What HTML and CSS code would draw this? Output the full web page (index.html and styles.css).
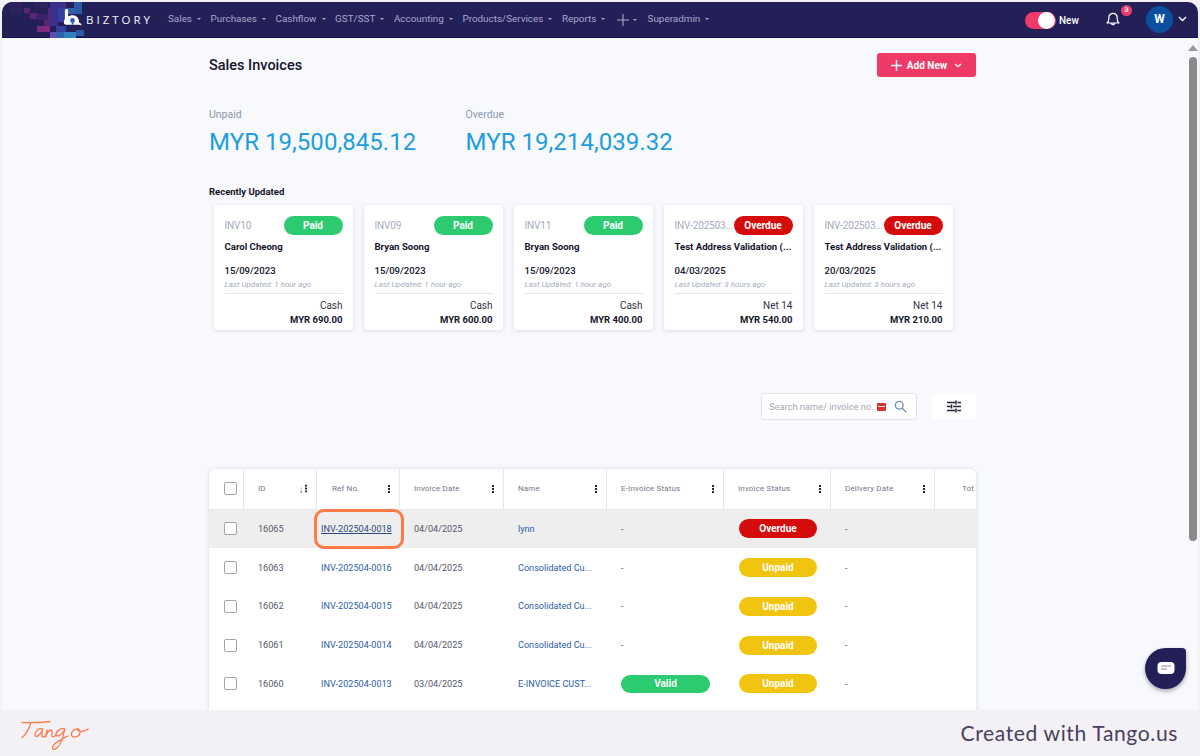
FILE: index.html
```html
<!DOCTYPE html>
<html lang="en">
<head>
<meta charset="utf-8">
<title>Sales Invoices</title>
<link rel="stylesheet" href="styles.css">
</head>
<body>
<div class="shot">
  <div class="window">
    <header class="nav">
      <svg class="pixels" width="100" height="36" viewBox="0 0 100 36" aria-hidden="true">
        <g fill="#2d2160"><rect x="8" y="0" width="12" height="12"/><rect x="32" y="0" width="14" height="6"/></g>
        <g fill="#3c2268"><rect x="22" y="6" width="6" height="6"/><rect x="36" y="12" width="10" height="6"/></g>
        <g fill="#5a2673"><rect x="22" y="6" width="6" height="5"/><rect x="28" y="11" width="7" height="6"/><rect x="46" y="6" width="8" height="12"/><rect x="42" y="18" width="6" height="6"/></g>
        <g fill="#7d2a7f"><rect x="35" y="24" width="13" height="6"/></g>
        <g fill="#3a2f8a"><rect x="48" y="0" width="8" height="24"/><rect x="56" y="0" width="8" height="12"/></g>
        <g fill="#33409f"><rect x="56" y="6" width="10" height="14"/><rect x="54" y="24" width="10" height="6"/></g>
        <g fill="#6a4ab0"><rect x="48" y="30" width="6" height="6"/></g>
        <g fill="#2f63ae"><rect x="54" y="30" width="14" height="6"/><rect x="66" y="6" width="8" height="6"/></g>
        <g fill="#2e82c0"><rect x="62" y="30" width="12" height="6"/></g>
        <g fill="#2c5aa6"><rect x="72" y="0" width="8" height="12"/><rect x="74" y="28" width="8" height="6"/></g>
      </svg>
      <a class="brand">
        <svg class="brand-mark" width="20" height="20" viewBox="0 0 20 20" aria-hidden="true">
          <path d="M3.500 1.500v11" stroke="#fff" stroke-width="3.200" stroke-linecap="round" fill="none"/>
          <path d="M10 6.200a6 6 0 0 1 5.800 7.200c1.600.3 2.600 1.300 2.800 3.200-1.200-.8-2.300-1-3.400-.8H3.600C1.600 15.800.6 14.600.9 12.500 1.800 8.600 5.500 6.200 10 6.200z" fill="#fff"/>
          <circle cx="9.500" cy="11.500" r="2.400" fill="#2f63ae"/>
          <path d="M9 12h1.200l.4 3.500H8.600z" fill="#2f63ae"/>
        </svg>
        <span class="brand-name">BIZTORY</span>
      </a>
      <nav class="menu">
        <a class="menu-item">Sales<i class="caret"></i></a>
        <a class="menu-item">Purchases<i class="caret"></i></a>
        <a class="menu-item">Cashflow<i class="caret"></i></a>
        <a class="menu-item">GST/SST<i class="caret"></i></a>
        <a class="menu-item">Accounting<i class="caret"></i></a>
        <a class="menu-item">Products/Services<i class="caret"></i></a>
        <a class="menu-item">Reports<i class="caret"></i></a>
        <a class="menu-item menu-plus"><svg width="12" height="12" viewBox="0 0 12 12" aria-hidden="true"><path d="M6 0v12M0 6h12" stroke="#a9a6c8" stroke-width="1.100"/></svg><i class="caret"></i></a>
        <a class="menu-item">Superadmin<i class="caret"></i></a>
      </nav>
      <div class="nav-right">
        <div class="toggle"><span class="toggle-knob"></span></div>
        <span class="toggle-label">New</span>
        <div class="bell">
          <svg width="14" height="16" viewBox="0 0 14 16" aria-hidden="true"><path d="M1 12c1.300-1 1.800-2 1.800-4V6.500a4.200 4.200 0 0 1 8.400 0V8c0 2 .5 3 1.800 4zM5.400 12.500a1.700 1.700 0 0 0 3.200 0" fill="none" stroke="#fff" stroke-width="1.200" stroke-linejoin="round"/></svg>
          <span class="badge">3</span>
        </div>
        <div class="avatar">W</div>
        <svg class="chev" width="9" height="6" viewBox="0 0 9 6" aria-hidden="true"><path d="M1 1l3.500 3.500L8 1" fill="none" stroke="#fff" stroke-width="1.300"/></svg>
      </div>
    </header>

    <div class="page">
      <main class="content">
        <div class="title-row">
          <h1 class="title">Sales Invoices</h1>
          <button class="add-btn">
            <svg width="11" height="11" viewBox="0 0 11 11" aria-hidden="true"><path d="M5.500 0v11M0 5.500h11" stroke="#fff" stroke-width="1.500"/></svg>
            <span>Add New</span>
            <svg width="8" height="5" viewBox="0 0 8 5" aria-hidden="true"><path d="M1 1l3 2.800L7 1" fill="none" stroke="#fff" stroke-width="1.200"/></svg>
          </button>
        </div>

        <div class="totals">
          <div class="total"><div class="total-label">Unpaid</div><div class="total-value">MYR 19,500,845.12</div></div>
          <div class="total"><div class="total-label">Overdue</div><div class="total-value">MYR 19,214,039.32</div></div>
        </div>

        <h2 class="recent-title">Recently Updated</h2>
        <div class="cards">
          <article class="card">
            <div class="card-top"><span class="card-ref">INV10</span><span class="pill pill-green card-pill">Paid</span></div>
            <div class="card-name">Carol Cheong</div>
            <div class="card-date">15/09/2023</div>
            <div class="card-updated">Last Updated: 1 hour ago</div>
            <div class="card-term">Cash</div>
            <div class="card-amount">MYR 690.00</div>
          </article>
          <article class="card">
            <div class="card-top"><span class="card-ref">INV09</span><span class="pill pill-green card-pill">Paid</span></div>
            <div class="card-name">Bryan Soong</div>
            <div class="card-date">15/09/2023</div>
            <div class="card-updated">Last Updated: 1 hour ago</div>
            <div class="card-term">Cash</div>
            <div class="card-amount">MYR 600.00</div>
          </article>
          <article class="card">
            <div class="card-top"><span class="card-ref">INV11</span><span class="pill pill-green card-pill">Paid</span></div>
            <div class="card-name">Bryan Soong</div>
            <div class="card-date">15/09/2023</div>
            <div class="card-updated">Last Updated: 1 hour ago</div>
            <div class="card-term">Cash</div>
            <div class="card-amount">MYR 400.00</div>
          </article>
          <article class="card">
            <div class="card-top"><span class="card-ref">INV-202503...</span><span class="pill pill-red card-pill">Overdue</span></div>
            <div class="card-name">Test Address Validation (...</div>
            <div class="card-date">04/03/2025</div>
            <div class="card-updated">Last Updated: 3 hours ago</div>
            <div class="card-term">Net 14</div>
            <div class="card-amount">MYR 540.00</div>
          </article>
          <article class="card">
            <div class="card-top"><span class="card-ref">INV-202503...</span><span class="pill pill-red card-pill">Overdue</span></div>
            <div class="card-name">Test Address Validation (...</div>
            <div class="card-date">20/03/2025</div>
            <div class="card-updated">Last Updated: 3 hours ago</div>
            <div class="card-term">Net 14</div>
            <div class="card-amount">MYR 210.00</div>
          </article>
        </div>

        <div class="tools">
          <div class="search">
            <span class="search-text">Search name/ invoice no.</span>
            <span class="search-flag"></span>
            <svg width="13" height="13" viewBox="0 0 13 13" aria-hidden="true"><circle cx="5.200" cy="5.200" r="3.900" fill="none" stroke="#6f8fb8" stroke-width="1.300"/><path d="M8 8l4.200 4.200" stroke="#6f8fb8" stroke-width="1.300"/></svg>
          </div>
          <button class="filter-btn">
            <svg width="14" height="13" viewBox="0 0 14 13" aria-hidden="true"><path d="M0 2.500h8M10.500 2.500H14M9 .5v4M0 6.500h3.500M6 6.500h8M4.500 4.500v4M0 10.500h8M10.500 10.500H14M9 8.500v4" fill="none" stroke="#23233a" stroke-width="1.500"/></svg>
          </button>
        </div>

        <section class="table">
          <div class="row head">
            <div class="cell cell-check"><span class="check"></span></div>
            <div class="cell">ID<span class="head-icons"><span class="sort">↓</span><i class="dots"></i></span></div>
            <div class="cell cell-ref">Ref No.<span class="head-icons"><i class="dots"></i></span></div>
            <div class="cell">Invoice Date<span class="head-icons"><i class="dots"></i></span></div>
            <div class="cell">Name<span class="head-icons"><i class="dots"></i></span></div>
            <div class="cell cell-einv">E-Invoice Status<span class="head-icons"><i class="dots"></i></span></div>
            <div class="cell">Invoice Status<span class="head-icons"><i class="dots"></i></span></div>
            <div class="cell">Delivery Date<span class="head-icons"><i class="dots"></i></span></div>
            <div class="cell cell-total">Tot</div>
          </div>
          <div class="row row-hover">
            <div class="cell cell-check"><span class="check"></span></div>
            <div class="cell">16065</div>
            <div class="cell cell-link cell-ref-val"><a class="link-under">INV-202504-0018</a><span class="highlight"></span></div>
            <div class="cell">04/04/2025</div>
            <div class="cell cell-link">lynn</div>
            <div class="cell cell-einv">-</div>
            <div class="cell"><span class="pill pill-red tbl-pill">Overdue</span></div>
            <div class="cell">-</div>
            <div class="cell"></div>
          </div>
          <div class="row">
            <div class="cell cell-check"><span class="check"></span></div>
            <div class="cell">16063</div>
            <div class="cell cell-link cell-ref-val">INV-202504-0016</div>
            <div class="cell">04/04/2025</div>
            <div class="cell cell-link">Consolidated Cu...</div>
            <div class="cell cell-einv">-</div>
            <div class="cell"><span class="pill pill-yellow tbl-pill">Unpaid</span></div>
            <div class="cell">-</div>
            <div class="cell"></div>
          </div>
          <div class="row">
            <div class="cell cell-check"><span class="check"></span></div>
            <div class="cell">16062</div>
            <div class="cell cell-link cell-ref-val">INV-202504-0015</div>
            <div class="cell">04/04/2025</div>
            <div class="cell cell-link">Consolidated Cu...</div>
            <div class="cell cell-einv">-</div>
            <div class="cell"><span class="pill pill-yellow tbl-pill">Unpaid</span></div>
            <div class="cell">-</div>
            <div class="cell"></div>
          </div>
          <div class="row">
            <div class="cell cell-check"><span class="check"></span></div>
            <div class="cell">16061</div>
            <div class="cell cell-link cell-ref-val">INV-202504-0014</div>
            <div class="cell">04/04/2025</div>
            <div class="cell cell-link">Consolidated Cu...</div>
            <div class="cell cell-einv">-</div>
            <div class="cell"><span class="pill pill-yellow tbl-pill">Unpaid</span></div>
            <div class="cell">-</div>
            <div class="cell"></div>
          </div>
          <div class="row">
            <div class="cell cell-check"><span class="check"></span></div>
            <div class="cell">16060</div>
            <div class="cell cell-link cell-ref-val">INV-202504-0013</div>
            <div class="cell">03/04/2025</div>
            <div class="cell cell-link">E-INVOICE CUST...</div>
            <div class="cell cell-einv"><span class="pill pill-green valid-pill">Valid</span></div>
            <div class="cell"><span class="pill pill-yellow tbl-pill">Unpaid</span></div>
            <div class="cell">-</div>
            <div class="cell"></div>
          </div>
          <div class="row-tail"></div>
        </section>
      </main>

      <div class="scrollbar">
        <span class="scroll-up"></span>
        <span class="scroll-thumb"></span>
      </div>
      <button class="chat">
        <svg width="18" height="14" viewBox="0 0 18 14" aria-hidden="true"><rect x="0.500" y="1" width="17" height="12" rx="4" fill="#fff"/><path d="M4 5h10M4 8h6" stroke="#8d8aa8" stroke-width="1"/></svg>
      </button>
    </div>
  </div>

  <footer class="footer">
    <svg class="tango-svg" width="70" height="32" viewBox="0 0 70 32" aria-hidden="true">
      <title>Tango</title>
      <g fill="none" stroke="#ff7a4a" stroke-width="1.300" stroke-linecap="round" stroke-linejoin="round">
        <path d="M2 3.500C11 4 21 3.500 30 2.500M11 3.500C9 10 7 15 2 18.500"/>
        <path d="M23 10C19 8.500 15 12 15 16C15 19 20 17 22.500 11C21.500 14 21.500 18 23.500 18C25.500 18 26.500 14 27 11C26.500 14 26 16 25.500 18C26.500 15 28.500 11 31 11C33 11 31.500 15 32 17C32.500 18.500 34.500 17.500 36 16"/>
        <path d="M45 10C41 8.500 36 12 36 15.500C36 18.500 41.500 17 44.500 11C43.500 17 41 25 37 29C34 32 31.500 30 33 27C35 23 42 20 48 17"/>
        <path d="M58 10C54 9.500 51 13 51.500 16C52 19 59 18.500 60 14C60.500 11.500 58.500 9.500 57 10.500C59 13 64 13 68 10"/>
      </g>
    </svg>
    <div class="made">Created with Tango.us</div>
  </footer>
</div>
</body>
</html>
```
FILE: styles.css
```css
* { box-sizing: border-box; }
html, body { margin: 0; padding: 0; height: 100%; overflow: hidden; }
body { font-family: Roboto, "Liberation Sans", sans-serif; background: #f3f1f6; color: #1a1a2e; }
h1, h2 { margin: 0; }
button { font: inherit; border: 0; padding: 0; }
a { color: inherit; }

.shot { width: 1200px; height: 756px; display: flex; flex-direction: column; padding-top: 2px; }
.window { flex: 1; min-height: 0; margin: 0 2px; display: flex; flex-direction: column; border-radius: 10px 10px 0 0; overflow: hidden; background: #f8f9fd; }

.nav { position: relative; height: 35.500px; flex: none; display: flex; align-items: center; background: #232058; border-bottom: 1px solid #14125a; color: #fff; }
.pixels { position: absolute; left: 0; top: 0; }
.brand { position: relative; display: flex; align-items: center; margin-left: 61px; width: 105px; }
.brand-mark { flex: none; margin-top: -1px; }
.brand-name { margin-left: 3px; font-family: "Open Sans", sans-serif; font-size: 11.500px; letter-spacing: 3px; color: #f4f4fa; }
.menu { display: flex; align-items: center; gap: 9.600px; margin-top: -1px; font-size: 9.900px; color: #a9a7cb; position: relative; }
.menu-item { display: flex; align-items: center; gap: 5px; white-space: nowrap; }
.menu-plus { gap: 4px; margin-top: 3px; margin-left: 2px; margin-right: 1px; }
.caret { display: inline-block; width: 0; height: 0; border-left: 2.300px solid transparent; border-right: 2.300px solid transparent; border-top: 2.300px solid #a9a7cb; }

.nav-right { margin-left: auto; display: flex; align-items: center; padding-right: 11px; }
.toggle { width: 31px; height: 17px; margin-top: 2px; border-radius: 9px; background: #f03a69; position: relative; }
.toggle-knob { position: absolute; right: 1px; top: 0; width: 17px; height: 17px; border-radius: 50%; background: #fff; }
.toggle-label { font-size: 10px; font-weight: 500; margin-left: 3.500px; width: 27px; margin-top: 2px; }
.bell { position: relative; width: 14px; height: 16px; margin-left: 20px; }
.badge { position: absolute; left: 15px; top: -6px; width: 11px; height: 11px; border-radius: 50%; background: #f03a69; color: #fff; font-size: 7px; font-weight: 700; line-height: 11px; text-align: center; }
.avatar { width: 27px; height: 27px; margin-left: 26px; border-radius: 50%; background: #0b4f9e; color: #fff; font-size: 12px; font-weight: 700; line-height: 26px; text-align: center; }
.chev { margin-left: 5px; }

.page { position: relative; flex: 1; min-height: 0; overflow: hidden; }
.content { width: 767px; margin-left: 207px; padding-top: 15.500px; }

.title-row { display: flex; justify-content: space-between; align-items: center; height: 24px; }
.title { font-size: 14.500px; font-weight: 500; color: #14142b; }
.add-btn { width: 99px; height: 24px; border-radius: 3px; background: #ef3a68; color: #fff; display: flex; align-items: center; justify-content: center; gap: 5px; font-size: 10px; font-weight: 700; }
.add-btn svg:last-child { margin-left: 2px; }

.totals { display: flex; margin-top: 31px; }
.total { width: 256.500px; }
.total-label { font-size: 10.500px; line-height: 13px; color: #8c98ae; }
.total-value { font-size: 24px; line-height: 29px; margin-top: 7px; color: #1c9ee0; letter-spacing: .05px; }

.recent-title { margin-top: 29px; font-size: 9.500px; line-height: 12px; font-weight: 700; color: #14142b; }

.cards { display: flex; gap: 11px; margin-top: 7px; margin-left: 4.500px; }
.card { width: 139px; height: 125px; padding: 11px 10px 0 11px; background: #fff; border-radius: 3px; box-shadow: 0 1px 4px rgba(60,70,110,.16); display: flex; flex-direction: column; }
.card-top { display: flex; align-items: center; justify-content: space-between; height: 19px; }
.card-ref { font-size: 10px; color: #a4acbd; white-space: nowrap; letter-spacing: -.15px; }
.pill { display: inline-flex; align-items: center; justify-content: center; border-radius: 10px; color: #fff; font-weight: 700; }
.card-pill { width: 59px; height: 19px; font-size: 10px; flex: none; }
.pill-green { background: #2ccb70; }
.pill-red { background: #d40c0c; }
.pill-yellow { background: #f1c40f; }
.card-name { margin-top: 6px; font-size: 9.600px; line-height: 12px; font-weight: 700; color: #14142b; white-space: nowrap; }
.card-date { margin-top: 12px; font-size: 9.600px; line-height: 12px; font-weight: 500; color: #14142b; }
.card-updated { margin-top: 3px; padding-bottom: 3px; font-size: 8px; line-height: 10px; font-style: italic; color: #a4acbd; border-bottom: 1px solid #e4e5ec; white-space: nowrap; }
.card-term { margin-top: 6px; font-size: 10px; line-height: 12px; text-align: right; color: #333344; }
.card-amount { margin-top: 2px; font-size: 9.500px; line-height: 12px; font-weight: 700; text-align: right; color: #14142b; }

.tools { display: flex; justify-content: flex-end; align-items: center; gap: 15px; margin-top: 63px; }
.search { width: 156px; height: 27px; display: flex; align-items: center; padding-left: 7px; background: #fff; border: 1px solid #e2e4ec; border-radius: 3px; }
.search-text { font-size: 9.300px; color: #a4a8b6; white-space: nowrap; width: 108px; }
.search-flag { width: 9px; height: 8px; margin-right: 8px; background: #d8322f; position: relative; border-radius: 1px; }
.search-flag::after { content: ""; position: absolute; left: 1px; right: 1px; top: 3px; height: 1px; background: #f6e6e6; }
.filter-btn { width: 44px; height: 25px; background: #fff; border-radius: 3px; display: flex; align-items: center; justify-content: center; }

.table { margin-top: 49px; background: #fff; border-radius: 6px 6px 0 0; box-shadow: 0 0 4px rgba(60,70,110,.18); overflow: hidden; }
.row { display: grid; grid-template-columns: 35px 73px 83px 104px 103px 117px 107px 104px 41px; height: 38.750px; align-items: center; font-size: 9.100px; color: #55586a; }
.row-tail { height: 30px; }
.cell { position: relative; padding-left: 14px; white-space: nowrap; display: flex; align-items: center; height: 100%; }
.cell-check { padding-left: 14.500px; }
.check { width: 13px; height: 13px; border: 1px solid #a3a3a8; border-radius: 2px; background: #fff; display: block; }
.cell-ref-val { padding-left: 4px; }
.cell-link { color: #2b5da6; }
.cell-einv { padding-left: 14px; }
.row-hover { background: #eeeeef; }
.head { height: 40.500px; font-size: 8px; font-weight: 400; color: #74768a; border-bottom: 1px solid #e6e7ea; letter-spacing: .15px; }
.head .cell { border-right: 1px solid #e6e7ea; }
.head .cell:last-child { border-right: 0; padding-left: 27px; }
.head .cell-ref { padding-left: 15px; }
.head-icons { position: absolute; right: 9px; top: 50%; transform: translateY(-50%); display: flex; align-items: center; gap: 1px; }
.sort { font-size: 10px; color: #6c6f80; font-weight: 400; }
.dots { display: block; width: 2px; height: 8px; background: radial-gradient(circle at 1px 1px, #24243a 1px, transparent 1.100px) 0 0 / 2px 3px repeat-y; }
.link-under { text-decoration: underline; color: #2b4a80; }
.highlight { position: absolute; left: -3.500px; top: -1px; width: 90px; height: 40px; border: 3px solid #ff7a45; border-radius: 10px; }
.tbl-pill { width: 78px; height: 19px; font-size: 10px; margin-left: 1px; }
.valid-pill { width: 89px; height: 18px; font-size: 10px; }

.scrollbar { position: absolute; right: 0; top: 0; bottom: 0; width: 11px; }
.scroll-up { position: absolute; left: 1px; top: 7px; width: 0; height: 0; border-left: 5px solid transparent; border-right: 5px solid transparent; border-bottom: 6px solid #9a9a9a; }
.scroll-thumb { position: absolute; left: 2px; top: 19px; width: 8px; height: 484px; border-radius: 4px; background: #8a8a8a; }
.chat { position: absolute; right: 12px; top: 610px; width: 41px; height: 41px; border-radius: 50% 4px 50% 50%; background: #232058; box-shadow: 0 2px 4px rgba(0,0,0,.35); display: flex; align-items: center; justify-content: center; }

.footer { flex: none; height: 46px; display: flex; align-items: center; justify-content: space-between; padding: 0 22px 0 20px; background: #f3f1f6; }
.tango-svg { margin-top: 4px; }
.made { margin-top: -2px; font-family: Lato, sans-serif; font-size: 21.100px; letter-spacing: .6px; color: #4a3f60; }
```
